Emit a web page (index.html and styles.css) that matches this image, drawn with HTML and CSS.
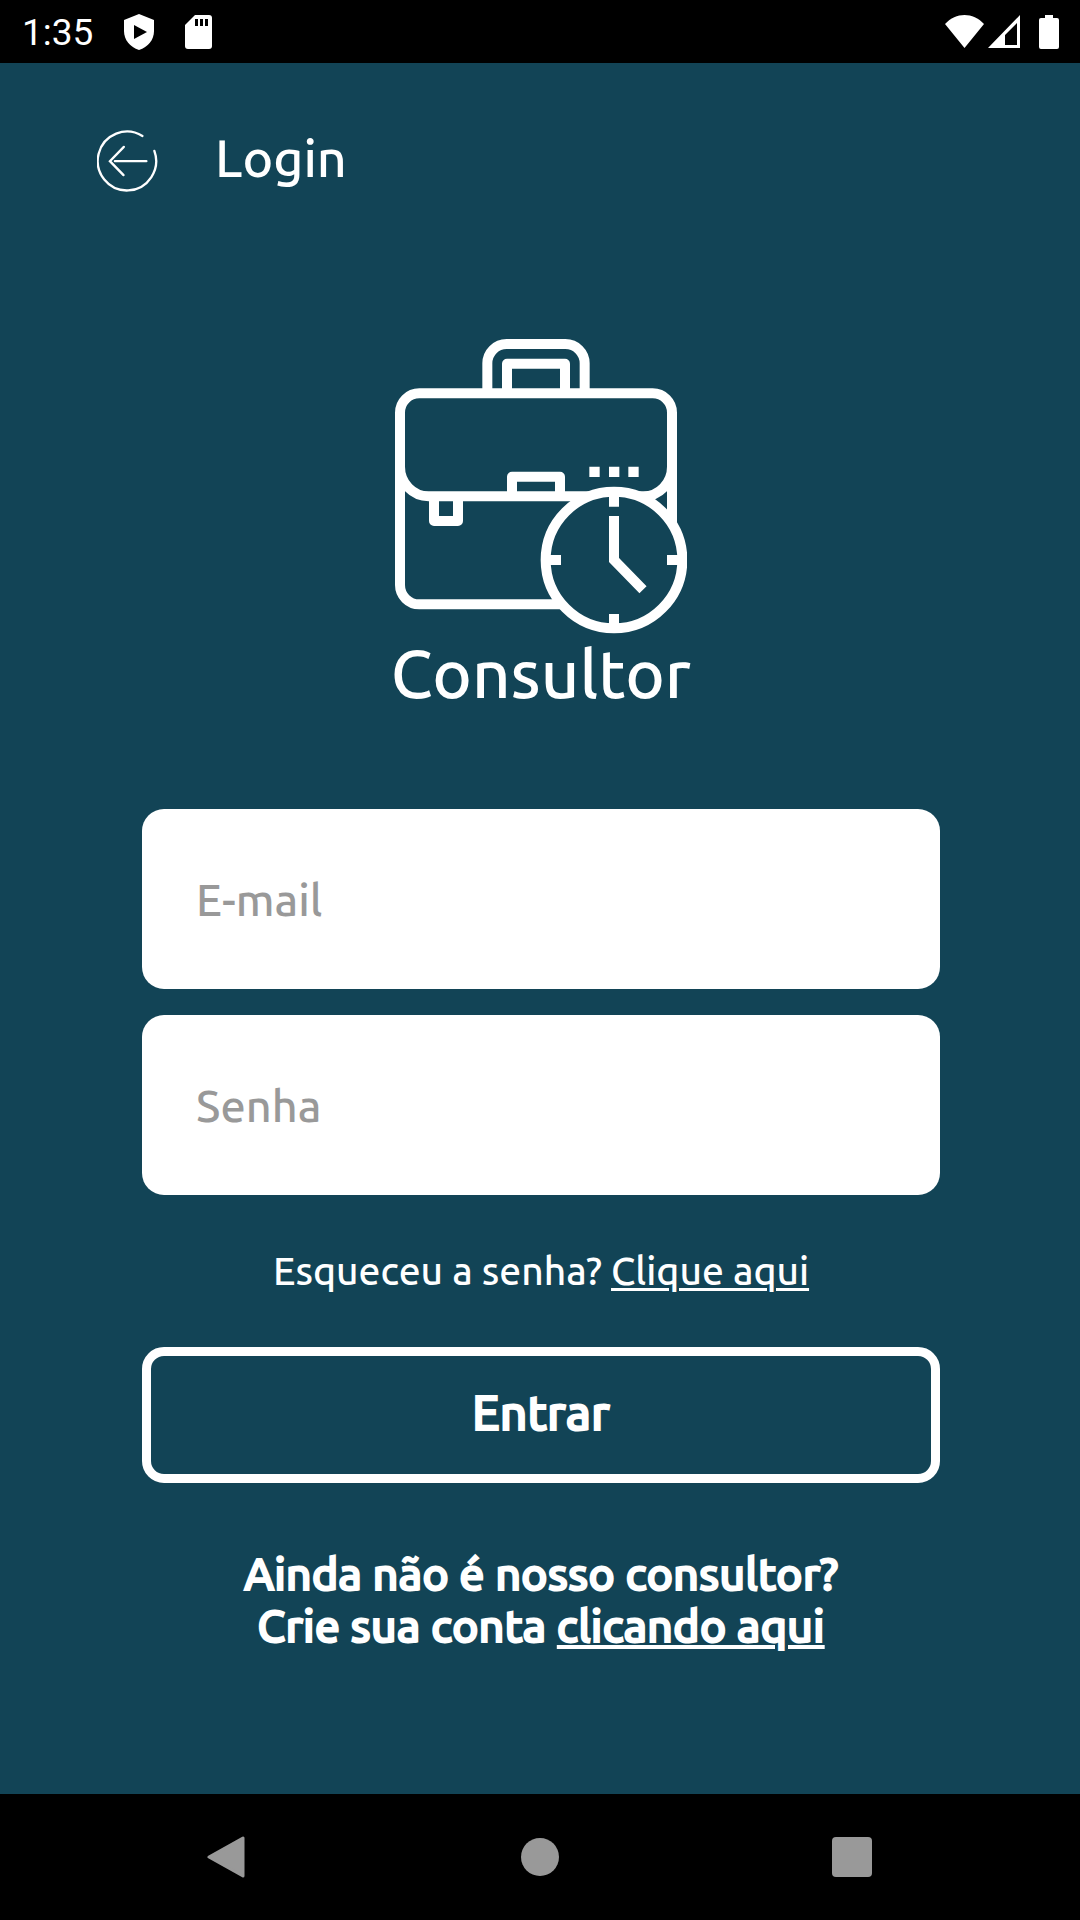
FILE: index.html
```html
<!DOCTYPE html>
<html lang="pt-BR">
<head>
  <meta charset="UTF-8" />
  <meta name="viewport" content="width=device-width, initial-scale=1.0"/>
  <title>Login - Consultor</title>
  <link rel="stylesheet" href="styles.css">
</head>
<body>

  <!-- Status bar -->
  <div class="status-bar">
    <div class="status-left">
      <span class="clock">1:35</span>
      <svg class="shield" width="30" height="36" viewBox="0 0 30 36">
        <path fill="#fff" d="M15 0 L30 6 V17 C30 26 24 33 15 36 C6 33 0 26 0 17 V6 Z"/>
        <path fill="#000" d="M10 11 L23 18 L10 25 Z"/>
      </svg>
      <svg width="27" height="34" viewBox="0 0 27 34">
        <path fill="#fff" d="M10 0 H24 Q27 0 27 3 V31 Q27 34 24 34 H3 Q0 34 0 31 V10 Z"/>
        <path fill="#000" d="M10 4 h3 v7 h-3 z M15 4 h3 v7 h-3 z M20 4 h3 v7 h-3 z"/>
      </svg>
    </div>
    <div class="status-right">
      <svg width="39" height="33" viewBox="0 0 39 33">
        <path fill="#fff" d="M0 9 C11 -3 28 -3 39 9 L19.500 33 Z"/>
      </svg>
      <svg width="32" height="33" viewBox="0 0 32 33">
        <path fill="#fff" fill-rule="evenodd" d="M32 0 V33 H0 Z M29 8 L17 20 V30 H29 Z"/>
      </svg>
      <svg class="battery" width="20" height="34" viewBox="0 0 20 34">
        <path fill="#fff" d="M6 0 H14 V3 H18 Q20 3 20 5 V32 Q20 34 18 34 H2 Q0 34 0 32 V5 Q0 3 2 3 H6 Z"/>
      </svg>
    </div>
  </div>

  <!-- Header -->
  <header class="header">
    <button class="back-btn" type="button" aria-label="Voltar">
      <svg width="61" height="63" viewBox="50 54 184 188">
        <path d="M187 74 A88 89 0 1 0 223 119"/>
        <path d="M131 107 L89 150 L130 192 M104 150 H199"/>
      </svg>
    </button>
    <h1>Login</h1>
  </header>

  <main class="content">
    <div class="profile">
      <svg class="briefcase" width="292" height="295" viewBox="45 57 876 885">
        <!-- handle -->
        <path d="M322 215 V130 A58 58 0 0 1 380 72 H556 A58 58 0 0 1 614 130 V215"/>
        <path d="M381 215 V131 H555 V215"/>
        <!-- case and flap -->
        <path d="M60 440 V795 A58 58 0 0 0 118 853 H560"/>
        <path d="M876 440 V640"/>
        <path d="M118 220 H818 A58 58 0 0 1 876 278 V440 A86 89 0 0 1 790 529 H146 A86 89 0 0 1 60 440 V278 A58 58 0 0 1 118 220 Z"/>
        <path d="M396 520 V470 H540 V520"/>
        <path d="M162 529 V603 H234 V529"/>
        <path class="solid" d="M628 440 h31 v31 h-31 z M687 440 h31 v31 h-31 z M745 440 h31 v31 h-31 z"/>
        <!-- clock -->
        <circle class="dial" cx="702" cy="720" r="205"/>
        <path d="M702 515 V560 M702 882 V925 M497 720 H543 M861 720 H907"/>
        <path class="hands" d="M702 588 V720 L789 809"/>
      </svg>
      <h2>Consultor</h2>
    </div>

    <!-- Login form -->
    <form class="login-form">
      <input type="email" id="email" placeholder="E-mail" aria-label="E-mail" />
      <input type="password" id="senha" placeholder="Senha" aria-label="Senha" />
      <p class="forgot">Esqueceu a senha? <a href="#">Clique aqui</a></p>
      <button class="submit-btn" type="submit">Entrar</button>
    </form>

    <p class="register">Ainda não é nosso consultor?<br />Crie sua conta <a href="#">clicando aqui</a></p>
  </main>

  <!-- Navigation bar -->
  <nav class="nav-bar">
    <button type="button" aria-label="Voltar">
      <svg width="42" height="42" viewBox="0 0 42 42">
        <path d="M36 2 V40 L2 21 Z" stroke="#999" stroke-width="3" stroke-linejoin="round"/>
      </svg>
    </button>
    <button type="button" aria-label="Início">
      <svg width="38" height="38" viewBox="0 0 38 38"><circle cx="19" cy="19" r="19"/></svg>
    </button>
    <button type="button" aria-label="Recentes">
      <svg width="40" height="40" viewBox="0 0 40 40"><rect width="40" height="40" rx="4"/></svg>
    </button>
  </nav>

</body>
</html>
```
FILE: styles.css
```css
/* Basic Reset */
* {
  margin: 0;
  padding: 0;
  box-sizing: border-box;
}

/* Body */
body {
  display: flex;
  flex-direction: column;
  min-height: 100vh;
  background: #124456;
  color: #fff;
  font-family: "Ubuntu", "Noto Sans", sans-serif;
  font-weight: 500;
}

button {
  background: none;
  border: none;
  color: inherit;
  font-family: inherit;
  font-weight: inherit;
  cursor: pointer;
}

svg {
  display: block;
}

a {
  color: inherit;
  text-decoration-thickness: 3px;
  text-underline-offset: 3px;
}

/* Status bar */
.status-bar {
  display: flex;
  align-items: center;
  justify-content: space-between;
  height: 63px;
  padding: 0 21px 0 22px;
  background: #000;
}

.status-left,
.status-right {
  display: flex;
  align-items: center;
}

.status-left {
  gap: 31px;
}

.status-right {
  gap: 4px;
}

.battery {
  margin-left: 15px;
}

.clock {
  font-family: Roboto, sans-serif;
  font-size: 37px;
  font-weight: 400;
  line-height: 40px;
  padding-top: 2px;
}

/* Header */
.header {
  display: flex;
  align-items: center;
  gap: 57px;
  padding: 65px 97px 0;
}

.header h1 {
  padding-bottom: 4px;
  font-size: 52px;
  font-weight: 500;
  line-height: 60px;
}

.back-btn svg {
  fill: none;
  stroke: #fff;
  stroke-width: 7;
  stroke-linecap: round;
}

/* Content */
.content {
  flex: 1;
  padding: 147px 140px 0 142px;
  text-align: center;
}

.profile {
  display: flex;
  flex-direction: column;
  align-items: center;
}

.profile h2 {
  font-size: 67px;
  font-weight: 500;
  line-height: 80px;
}

.briefcase {
  fill: none;
  stroke: #fff;
  stroke-width: 30;
  stroke-linejoin: round;
}

.briefcase .solid {
  fill: #fff;
  stroke: none;
}

.briefcase .dial {
  fill: #124456;
}

.briefcase .hands {
  stroke-linejoin: miter;
}

/* Login form */
.login-form {
  display: flex;
  flex-direction: column;
  margin-top: 95px;
}

.login-form input {
  width: 100%;
  height: 180px;
  margin-bottom: 26px;
  padding: 0 54px;
  background: #fff;
  border: none;
  border-radius: 22px;
  color: #333;
  font-family: inherit;
  font-size: 45px;
  font-weight: inherit;
}

.login-form input::placeholder {
  color: #999;
}

.forgot {
  margin: 24px 0 50px;
  font-size: 39px;
  line-height: 52px;
}

.submit-btn {
  height: 136px;
  padding-bottom: 6px;
  border: 9px solid #fff;
  border-radius: 22px;
  font-size: 48px;
  -webkit-text-stroke: 2px #fff;
}

.register {
  margin-top: 65px;
  font-size: 45px;
  line-height: 52px;
  -webkit-text-stroke: 2px #fff;
}

.register a {
  text-decoration-thickness: 4px;
}

/* Navigation bar */
.nav-bar {
  display: flex;
  height: 126px;
  padding: 0 72px;
  background: #000;
}

.nav-bar button {
  display: flex;
  flex: 1;
  align-items: center;
  justify-content: center;
}

.nav-bar svg {
  fill: #999;
}
```
